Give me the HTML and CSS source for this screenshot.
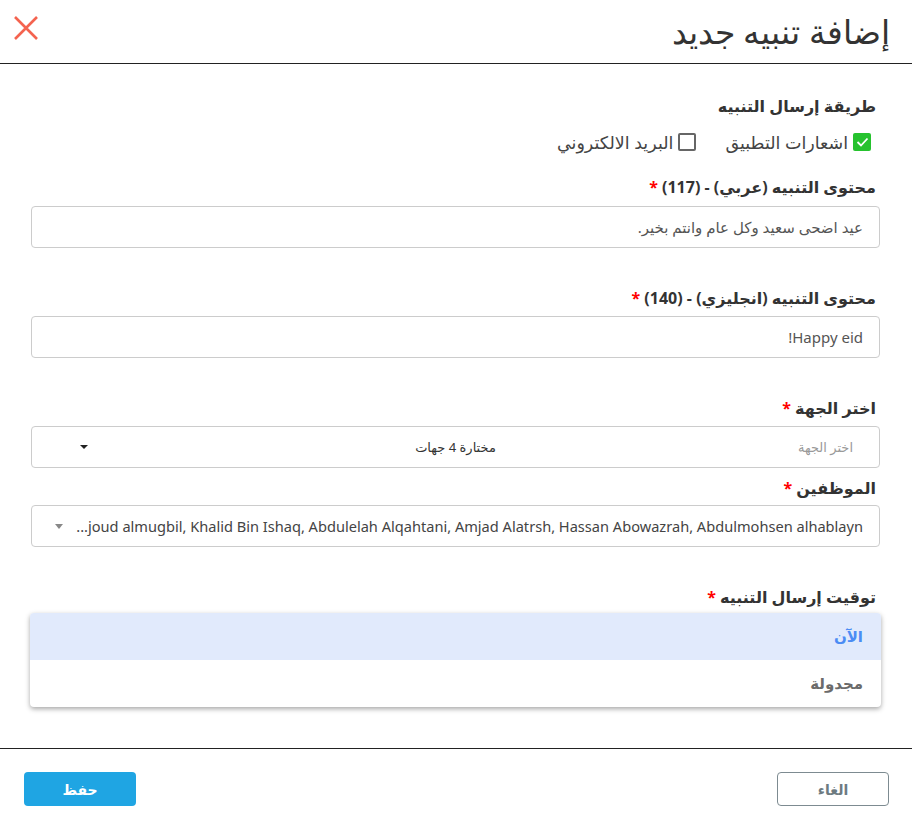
FILE: index.html
```html
<!DOCTYPE html>
<html lang="ar" dir="rtl">
<head>
    <meta charset="UTF-8">
    <meta name="viewport" content="width=device-width, initial-scale=1.0">
    <title>إضافة تنبيه جديد</title>
    <link rel="stylesheet" href="styles.css">
</head>
<body>
    <div class="modal">
        <div class="modal-header">
            <h1 class="modal-title">إضافة تنبيه جديد</h1>
            <button class="close-btn" aria-label="إغلاق">
                <svg width="26" height="24" viewBox="0 0 26 24">
                    <path d="M2 1 L24 23 M24 1 L2 23" stroke="#f4634f" stroke-width="2.6" fill="none"/>
                </svg>
            </button>
        </div>

        <div class="modal-body">
            <div class="section-title">طريقة إرسال التنبيه</div>
            <div class="checks">
                <label class="check">
                    <span class="box checked">
                        <svg width="13" height="10" viewBox="0 0 13 10">
                            <path d="M1.5 5 L5 8.5 L11.5 1.5" stroke="#fff" stroke-width="1.8" fill="none"/>
                        </svg>
                    </span>
                    اشعارات التطبيق
                </label>
                <label class="check">
                    <span class="box"></span>
                    البريد الالكتروني
                </label>
            </div>

            <div class="field-label first">محتوى التنبيه (عربي) - (117) <span class="req">*</span></div>
            <div class="input">عيد اضحى سعيد وكل عام وانتم بخير.</div>

            <div class="field-label">محتوى التنبيه (انجليزي) - (140) <span class="req">*</span></div>
            <div class="input">Happy eid!</div>

            <div class="field-label">اختر الجهة <span class="req">*</span></div>
            <div class="input select-grid">
                <span class="placeholder">اختر الجهة</span>
                <span class="selected">مختارة 4 جهات</span>
                <span class="caret dark"></span>
            </div>

            <div class="field-label tight">الموظفين <span class="req">*</span></div>
            <div class="input select-line">
                <span class="names">...joud almugbil, Khalid Bin Ishaq, Abdulelah Alqahtani, Amjad Alatrsh, Hassan Abowazrah, Abdulmohsen alhablayn</span>
                <span class="caret grey"></span>
            </div>

            <div class="field-label open">توقيت إرسال التنبيه <span class="req">*</span></div>
            <div class="dropdown">
                <div class="option active">الآن</div>
                <div class="option">مجدولة</div>
            </div>
        </div>

        <div class="modal-footer">
            <button class="btn btn-cancel">الغاء</button>
            <button class="btn btn-save">حفظ</button>
        </div>
    </div>
</body>
</html>
```

FILE: styles.css
```css
body {
    margin: 0;
    background-color: #fff;
    font-family: "Noto Sans", "DejaVu Sans", sans-serif;
    color: #333;
}
.modal {
    direction: rtl;
    width: 912px;
}
.modal-header {
    height: 63px;
    display: flex;
    align-items: center;
    justify-content: space-between;
    padding: 0 22px 0 13px;
    border-bottom: 1px solid #222;
}
.modal-title {
    margin: 0;
    font-size: 33px;
    font-weight: 300;
    color: #333;
}
.close-btn {
    background: none;
    border: none;
    padding: 0;
    margin-top: -4px;
    cursor: pointer;
}
.modal-body {
    padding: 30px 32px 41px 31px;
}
.section-title {
    font-size: 16px;
    font-weight: bold;
    line-height: 24px;
    padding-right: 4px;
    color: #333;
}
.checks {
    display: flex;
    gap: 29px;
    margin-top: 12px;
    padding-right: 9px;
    line-height: 24px;
    font-size: 17.5px;
    color: #444;
}
.check {
    display: flex;
    align-items: center;
    gap: 5px;
}
.box {
    width: 14px;
    height: 14px;
    border: 2px solid #666;
    border-radius: 2px;
    display: flex;
    align-items: center;
    justify-content: center;
}
.box.checked {
    width: 18px;
    height: 18px;
    border: none;
    background-color: #26c22e;
}
.field-label {
    font-size: 16px;
    font-weight: bold;
    line-height: 24px;
    margin-top: 38px;
    margin-bottom: 6px;
    padding-right: 4px;
    color: #333;
}
.field-label.first {
    margin-top: 21px;
    margin-bottom: 7px;
}
.field-label.tight {
    margin-top: 8px;
    margin-bottom: 5px;
}
.field-label.open {
    margin-bottom: 4px;
}
.req {
    color: #f00;
}
.input {
    height: 40px;
    border: 1px solid #ccc;
    border-radius: 4px;
    padding: 0 16px;
    display: flex;
    align-items: center;
    font-size: 15px;
    color: #555;
}
.select-grid {
    display: grid;
    grid-template-columns: 1fr auto 1fr;
    padding: 0 26px;
}
.placeholder {
    font-size: 13px;
    color: #999;
}
.selected {
    font-size: 13px;
    color: #333;
}
.select-grid .caret {
    justify-self: end;
    margin-left: 22px;
}
.caret {
    width: 0;
    height: 0;
    border-left: 4px solid transparent;
    border-right: 4px solid transparent;
}
.caret.dark {
    border-top: 4px solid #222;
}
.caret.grey {
    border-top: 5px solid #888;
    flex-shrink: 0;
}
.select-line {
    gap: 6px;
    padding-left: 23px;
}
.names {
    flex: 1;
    min-width: 0;
    direction: ltr;
    text-align: right;
    white-space: nowrap;
    font-size: 14.6px;
    color: #444;
}
.dropdown {
    margin-left: -1px;
    margin-right: -1px;
    border-radius: 4px;
    box-shadow: 0 2px 5px rgba(0,0,0,0.35);
    overflow: hidden;
}
.option {
    height: 47px;
    line-height: 47px;
    padding-right: 18px;
    font-size: 15px;
    font-weight: 600;
    color: #6b6b6b;
}
.option.active {
    background-color: #e1eafc;
    color: #4b8cf4;
}
.modal-footer {
    border-top: 1px solid #222;
    display: flex;
    justify-content: space-between;
    padding: 23px 23px 0 24px;
}
.btn {
    width: 112px;
    height: 34px;
    border-radius: 4px;
    font-family: inherit;
    font-size: 14px;
    font-weight: bold;
    cursor: pointer;
}
.btn-cancel {
    background-color: #fff;
    border: 1px solid #7d8b91;
    color: #6d7b81;
}
.btn-save {
    background-color: #1fa5e3;
    border: none;
    color: #fff;
}
```
